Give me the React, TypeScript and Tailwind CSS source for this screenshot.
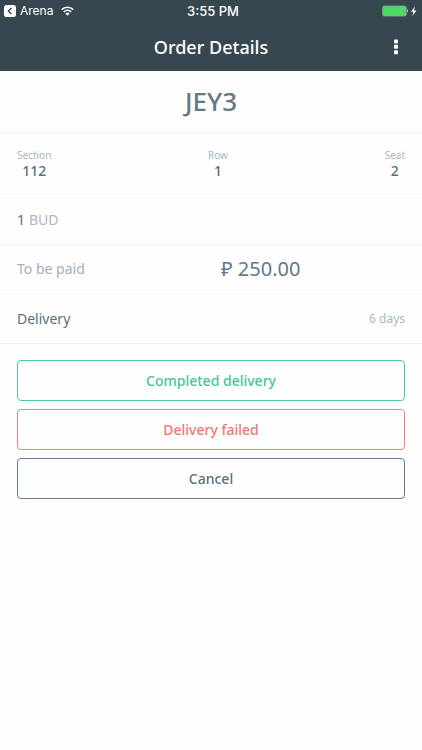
import React from "react";
import clsx from "clsx";

interface SeatFieldProps {
  label: string;
  value: string;
}

const SeatField: React.FC<SeatFieldProps> = ({ label, value }) => (
  <div className="flex flex-col items-center">
    <dt className="text-[10px] leading-[14px] text-[#a9b8c4]">{label}</dt>
    <dd className="text-sm leading-[18px] font-medium text-[#5b6e7d]">{value}</dd>
  </div>
);

interface ActionButtonProps {
  children: React.ReactNode;
  className: string;
}

const ActionButton: React.FC<ActionButtonProps> = ({ children, className }) => (
  <button
    type="button"
    className={clsx("h-[41px] w-full rounded border text-sm font-medium", className)}
  >
    {children}
  </button>
);

const StatusBar = () => (
  <div className="grid h-[22px] grid-cols-3 items-center pl-1 font-['Inter',sans-serif] leading-4">
    <div className="flex items-center">
      <svg viewBox="0 0 12 12" className="mr-1 size-3" aria-hidden="true">
        <rect width="12" height="12" rx="2.5" fill="#fff" />
        <path d="M7.4 3 4.4 6l3 3" fill="none" stroke="#36474f" strokeWidth="1.4" />
      </svg>
      <span className="text-xs">Arena</span>
      <svg viewBox="0 0 13 10" className="ml-2 h-[10px] w-[13px]" aria-hidden="true">
        <path d="M.7 3.6a8.2 8.2 0 0 1 11.6 0" fill="none" stroke="#fff" strokeWidth="1.5" />
        <path d="M2.8 5.9a5.2 5.2 0 0 1 7.4 0" fill="none" stroke="#fff" strokeWidth="1.5" />
        <path d="M4.4 7.6a3 3 0 0 1 4.2 0L6.5 9.8z" fill="#fff" />
      </svg>
    </div>
    <span className="text-center text-[13px] font-medium">3:55 PM</span>
    <div className="flex items-center justify-end pr-1">
      <svg viewBox="0 0 36 12" className="h-3 w-9" aria-hidden="true">
        <rect x=".7" y="1" width="23.5" height="10" rx="1.5" fill="#4cd964" stroke="#8fa59b" strokeWidth=".8" />
        <path d="M25 4.3c1.3.3 1.3 3.1 0 3.4z" fill="#c5cdd1" />
        <path d="M32.8 1.4 29 6.8h2.4l-1 4.2 4.1-5.6H32z" fill="#fff" />
      </svg>
    </div>
  </div>
);

const App = () => {
  return (
    <div className="min-h-screen bg-[#fefefe] font-['Noto_Sans',sans-serif] text-[#5b6e7d]">
      <header className="bg-[#36474f] text-white">
        <StatusBar />
        <div className="grid h-[49px] grid-cols-[1fr_auto_1fr] items-center px-4">
          <h1 className="col-start-2 text-lg leading-6 font-medium">Order Details</h1>
          <button type="button" aria-label="More options" className="flex h-6 w-5 items-center justify-center justify-self-end">
            <svg viewBox="0 0 4 16" className="h-4 w-1" fill="#fff" aria-hidden="true">
              <rect y=".4" width="4" height="4" rx=".8" />
              <rect y="5.8" width="4" height="4" rx=".8" />
              <rect y="11.2" width="4" height="4" rx=".8" />
            </svg>
          </button>
        </div>
      </header>

      <main>
        <h2 className="flex h-[62px] items-center justify-center border-b border-[#f3f4f5] text-[26px] font-medium text-[#647888]">
          JEY3
        </h2>
        <dl className="flex h-[62px] items-center justify-between border-b border-[#f5f6f7] px-[17px]">
          <SeatField label="Section" value="112" />
          <SeatField label="Row" value="1" />
          <SeatField label="Seat" value="2" />
        </dl>
        <div className="flex h-[50px] items-center gap-1 border-b border-[#f5f6f7] px-[17px] text-sm">
          <span>1</span>
          <span className="text-[#a9b8c4]">BUD</span>
        </div>
        <div className="grid h-[49px] grid-cols-2 items-center border-b border-[#f5f6f7] px-[17px]">
          <span className="text-sm text-[#a0b0bc]">To be paid</span>
          <span className="pl-[10px] text-xl text-[#647888]">₽ 250.00</span>
        </div>
        <div className="flex h-[50px] items-center justify-between border-b border-[#f3f4f5] px-[17px]">
          <span className="text-sm">Delivery</span>
          <span className="text-xs text-[#a9b8c4]">6 days</span>
        </div>
        <div className="flex flex-col gap-2 px-[17px] py-4">
          <ActionButton className="border-[#4fcb9b] text-[#45c794]">Completed delivery</ActionButton>
          <ActionButton className="border-[#f58080] text-[#f47575]">Delivery failed</ActionButton>
          <ActionButton className="border-[#6b7d8b] text-[#5b6e7d]">Cancel</ActionButton>
        </div>
      </main>
    </div>
  );
};

export default App;
